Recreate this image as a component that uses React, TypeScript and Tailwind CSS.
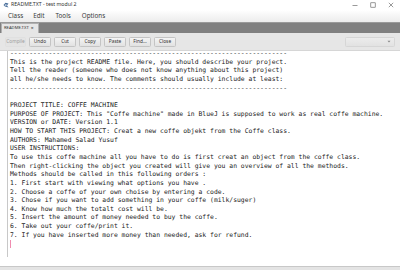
import React from "react";

const lines = [
  "------------------------------------------------------------------------",
  "This is the project README file. Here, you should describe your project.",
  "Tell the reader (someone who does not know anything about this project)",
  "all he/she needs to know. The comments should usually include at least:",
  "------------------------------------------------------------------------",
  "",
  "PROJECT TITLE: COFFE MACHINE",
  'PURPOSE OF PROJECT: This "Coffe machine" made in BlueJ is supposed to work as real coffe machine.',
  "VERSION or DATE: Version 1.1",
  "HOW TO START THIS PROJECT: Creat a new coffe objekt from the Coffe class.",
  "AUTHORS: Mahamed Salad Yusuf",
  "USER INSTRUCTIONS:",
  "To use this coffe machine all you have to do is first creat an object from the coffe class.",
  "Then right-clicking the object you created will give you an overview of all the methods.",
  "Methods should be called in this following orders :",
  "1. First start with viewing what options you have .",
  "2. Choose a coffe of your own choise by entering a code.",
  "3. Chose if you want to add something in your coffe (milk/suger)",
  "4. Know how much the totalt cost will be.",
  "5. Insert the amount of money needed to buy the coffe.",
  "6. Take out your coffe/print it.",
  "7. If you have inserted more money than needed, ask for refund.",
];

function Btn({ label, disabled }: { label: string; disabled?: boolean }) {
  return (
    <div
      className={
        disabled
          ? "h-[10px] w-[21px] flex items-center justify-center text-[4.8px] text-[#a0a0a0] rounded-[1.5px] border border-[#e0e0e0] bg-[#e4e4e4]"
          : "h-[10px] w-[22px] flex items-center justify-center text-[4.8px] text-[#333] rounded-[1.5px] border border-[#c4c4c4] bg-gradient-to-b from-[#f4f4f4] to-[#e2e2e2]"
      }
    >
      {label}
    </div>
  );
}

export default function App() {
  return (
    <div
      className="w-[400px] h-[270px] overflow-hidden bg-white flex flex-col"
      style={{ fontFamily: '"Noto Sans", "Liberation Sans", sans-serif' }}
    >
      {/* Title bar */}
      <div className="h-[10px] flex items-center bg-white relative">
        <svg width="6" height="6" viewBox="0 0 6 6" className="ml-[3px]">
          <path d="M0.5 3 L2.5 0.8 L5.5 1.5 L4 3.5 L5.5 5.5 L2 4.5 Z" fill="#4a6f9a" />
          <path d="M1.5 3 L3 2 L4 3.2 L2.5 4 Z" fill="#c9d6e6" />
        </svg>
        <span className="ml-[2px] text-[5.2px] text-[#333] leading-none">README.TXT - test modul 2</span>
        <div className="ml-auto flex items-center gap-[12px] mr-[6px]">
          <svg width="6" height="6" viewBox="0 0 6 6">
            <line x1="0.5" y1="3.5" x2="5.5" y2="3.5" stroke="#555" strokeWidth="0.6" />
          </svg>
          <svg width="6" height="6" viewBox="0 0 6 6">
            <rect x="0.8" y="0.8" width="4.4" height="4.4" fill="none" stroke="#555" strokeWidth="0.6" />
          </svg>
          <svg width="6" height="6" viewBox="0 0 6 6">
            <line x1="0.8" y1="0.8" x2="5.2" y2="5.2" stroke="#555" strokeWidth="0.6" />
            <line x1="5.2" y1="0.8" x2="0.8" y2="5.2" stroke="#555" strokeWidth="0.6" />
          </svg>
        </div>
      </div>

      {/* Menu bar */}
      <div className="h-[12px] flex items-center bg-gradient-to-b from-[#ffffff] to-[#ececec] text-[6.3px] text-[#3a3a3a]">
        <span className="ml-[8px]">Class</span>
        <span className="ml-[10px]">Edit</span>
        <span className="ml-[11px]">Tools</span>
        <span className="ml-[11px]">Options</span>
      </div>

      {/* Tab bar */}
      <div className="h-[11px] bg-[#808080] flex items-end pl-[1px] border-t border-[#9a9a9a]">
        <div className="h-[10px] w-[38px] bg-[#e6e6e6] border border-b-0 border-[#b0b0b0] flex items-center pl-[2px] gap-[2px] text-[4.2px] text-[#333] whitespace-nowrap overflow-hidden">
          <span>README.TXT</span>
          <span className="text-[5px] leading-none">×</span>
        </div>
      </div>

      {/* Toolbar */}
      <div className="h-[18px] bg-[#e6e6e6] flex items-center pl-[5px] pr-[5px] border-b border-[#d6d6d6]">
        <div className="flex items-center gap-[3px]">
          <Btn label="Compile" disabled />
          <Btn label="Undo" />
          <Btn label="Cut" />
          <Btn label="Copy" />
          <Btn label="Paste" />
          <Btn label="Find..." />
          <Btn label="Close" />
        </div>
        <div className="ml-auto h-[10px] w-[50px] rounded-[1.5px] border border-[#d6d6d6] bg-gradient-to-b from-[#ececec] to-[#e2e2e2] flex items-center justify-end pr-[3px]">
          <svg width="4" height="3" viewBox="0 0 4 3">
            <path d="M0.5 0.8 L3.5 0.8 L2 2.4 Z" fill="#888" />
          </svg>
        </div>
      </div>

      {/* Editor */}
      <div className="flex-1 flex bg-white min-h-0">
        <div className="w-[8px] border-r border-[#c8c8c8] h-[206px]" />
        <div
          className="pl-[2px] text-[6.4px] leading-[8.67px] text-[#222] whitespace-pre"
          style={{ fontFamily: '"DejaVu Sans Mono", "Liberation Mono", monospace' }}
        >
          <div className="-mt-[2px]">
            {lines.map((l, i) => (
              <div key={i} className="h-[8.67px]">
                {l || " "}
              </div>
            ))}
            <div className="h-[8.67px] flex items-center">
              <div className="w-[1px] h-[8px] bg-[#f08cb0]" />
            </div>
          </div>
        </div>
      </div>

      {/* Bottom strip */}
      <div className="h-[4px] bg-[#e4e4e4] border-t border-[#c8c8c8]" />
    </div>
  );
}
